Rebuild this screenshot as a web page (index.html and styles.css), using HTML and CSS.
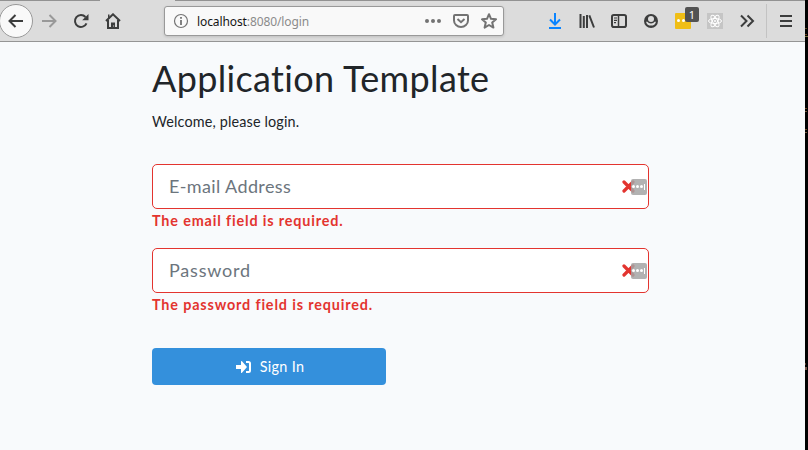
FILE: index.html
```html
<!DOCTYPE html>
<html lang="en">
<head>
<meta charset="utf-8">
<title>Application Template</title>
<link rel="stylesheet" href="styles.css">
</head>
<body>
<div class="window">
  <header class="toolbar">
    <span class="tool back"><svg width="16" height="16" viewBox="0 0 16 16"><path d="M15 8H2M7.500 2L1.500 8l6 6"/></svg></span>
    <span class="tool forward"><svg width="16" height="16" viewBox="0 0 16 16"><path d="M1 8h13M8.500 2l6 6-6 6"/></svg></span>
    <span class="tool"><svg width="16" height="16" viewBox="0 0 16 16"><path d="M13.500 10.300A6 6 0 1 1 12.500 4"/><path class="solid" d="M15.500 1v6.300H9.200z"/></svg></span>
    <span class="tool"><svg width="16" height="16" viewBox="0 0 16 16"><path d="M1 8l7-6.700L15 8M3 7v8h10V7"/><path class="solid" d="M6 9.500h4V15H6zM3 1.500h1.500v4H3z"/><path class="dot" d="M8.600 12.500v1"/></svg></span>
    <div class="address">
      <svg class="info" width="16" height="16" viewBox="0 0 16 16"><circle cx="8" cy="8" r="6.500" stroke-width="1.200"/><path stroke-width="1.800" d="M8 7v5M8 4v1.700"/></svg>
      <span class="url">localhost<span class="path">:8080/login</span></span>
      <span class="actions">
        <svg width="16" height="16" viewBox="0 0 16 16"><g class="solid"><circle cx="2" cy="8" r="2"/><circle cx="8" cy="8" r="2"/><circle cx="14" cy="8" r="2"/></g></svg>
        <svg width="16" height="16" viewBox="0 0 16 16"><path d="M2 2h12q1 0 1 1v4.500a7 6.500 0 0 1-14 0V3q0-1 1-1zM4.500 6L8 9.200 11.500 6"/></svg>
        <svg width="16" height="16" viewBox="0 0 16 16"><path stroke-linejoin="round" d="M8 1.200l2 4.600 5 .5-3.800 3.300 1.200 5L8 12l-4.400 2.600 1.200-5L1 6.300l5-.5z"/></svg>
      </span>
    </div>
    <div class="extras">
      <span class="tool download"><svg width="16" height="16" viewBox="0 0 16 16"><path d="M8 0v11M3 6.500l5 5 5-5M2 15h12"/></svg></span>
      <span class="tool"><svg width="16" height="16" viewBox="0 0 16 16"><path d="M1.500 1v14M4.800 3v12M8 2v13M10.300 2.300L15 14.500"/></svg></span>
      <span class="tool"><svg width="16" height="16" viewBox="0 0 16 16"><rect x="1" y="2" width="14" height="12" rx="1.800"/><path stroke-width="1.500" d="M7.500 2v12"/><path stroke-width="1.200" d="M3 5h3M3 7.300h3M3 9.600h2"/></svg></span>
      <span class="tool"><svg width="16" height="16" viewBox="0 0 16 16"><circle class="solid" cx="8" cy="8" r="7"/><circle class="face" cx="8" cy="5.900" r="3"/><path class="face" d="M3 8.700h1.400Q5.500 10.500 8 10.500t3.600-1.800H13Q12 12.600 8 12.600T3 8.700z"/></svg></span>
      <span class="tool"><span class="passwords"><i></i><i></i><i></i></span><span class="badge">1</span></span>
      <span class="tool"><svg class="react" width="16" height="16" viewBox="0 0 16 16"><ellipse cx="8" cy="8" rx="6.500" ry="2.500"/><ellipse cx="8" cy="8" rx="6.500" ry="2.500" transform="rotate(60 8 8)"/><ellipse cx="8" cy="8" rx="6.500" ry="2.500" transform="rotate(120 8 8)"/><circle cx="8" cy="8" r=".7"/></svg></span>
      <span class="tool"><svg width="16" height="16" viewBox="0 0 16 16"><path d="M2 2.500L7.500 8 2 13.500M8.500 2.500L14 8l-5.500 5.500"/></svg></span>
      <span class="tool menu"><svg width="16" height="16" viewBox="0 0 16 16"><path d="M2 3h12M2 8h12M2 13h12"/></svg></span>
    </div>
  </header>
  <main class="login">
    <h1>Application Template</h1>
    <p class="welcome">Welcome, please login.</p>
    <form>
      <div class="field">
        <div class="input"><span class="email-label">E-mail Address</span><span class="marks"><svg width="13" height="13" viewBox="0 0 13 13"><path d="M2 2l9 9M11 2l-9 9"/></svg><span class="manager"><i></i><i></i><i></i><b></b></span></span></div>
        <p class="error">The email field is required.</p>
      </div>
      <div class="field">
        <div class="input"><span class="password-label">Password</span><span class="marks"><svg width="13" height="13" viewBox="0 0 13 13"><path d="M2 2l9 9M11 2l-9 9"/></svg><span class="manager"><i></i><i></i><i></i><b></b></span></span></div>
        <p class="error">The password field is required.</p>
      </div>
      <button type="button"><svg width="15" height="14" viewBox="0 0 15 14"><path fill="#fff" d="M0 5h5V1.500q0-1 1-.3L11 7l-5 5.800q-1 .7-1-.3V9H0z"/><path fill="none" stroke="#fff" stroke-width="2" d="M10 2h2.500q1.500 0 1.500 1.500v7q0 1.500-1.500 1.500H10"/></svg><span>Sign In</span></button>
    </form>
  </main>
</div>
</body>
</html>
```
FILE: styles.css
```css
* { box-sizing: border-box; }
html { background: #000; }
body {
  margin: 0;
  overflow: hidden;
  background:
    linear-gradient(#55431f, #55431f) 805px 28px / 2px 1px no-repeat,
    linear-gradient(#69421f, #69421f) 805px 34px / 2px 1px no-repeat,
    linear-gradient(#77713c, #77713c) 805px 36px / 3px 1px no-repeat,
    linear-gradient(#69421f, #69421f) 805px 108px / 2px 1px no-repeat,
    linear-gradient(#73533b, #73533b) 805px 111px / 2px 1px no-repeat,
    linear-gradient(#69421f, #69421f) 805px 129px / 2px 1px no-repeat,
    linear-gradient(#73533b, #73533b) 805px 132px / 2px 1px no-repeat,
    linear-gradient(#55352a, #55352a) 805px 363px / 1px 2px no-repeat,
    linear-gradient(#77574a, #77574a) 805px 367px / 2px 3px no-repeat,
    #000;
}
.window { width: 805px; height: 450px; background: #f8fafc; font-family: Lato, sans-serif; color: #212529; }
.toolbar {
  display: flex;
  align-items: center;
  height: 42px;
  border-bottom: 1px solid #959595;
  background: linear-gradient(90deg, #929292 100px, #dcdcdc 100px 175px, #929292 175px) top / 100% 1px no-repeat #dcdcdc;
}
.toolbar svg { display: block; fill: none; stroke: currentColor; stroke-width: 2; }
.toolbar .solid { fill: currentColor; stroke: none; }
.toolbar .face { fill: #dcdcdc; stroke: none; }
.toolbar .dot { stroke: #ddd; stroke-width: 1; }
.tool { position: relative; flex: none; display: grid; place-items: center; width: 32px; height: 34px; color: #3c3d3d; }
.back { width: 34px; margin-left: -1px; border: 1px solid #999; border-radius: 50%; background: #f9f9f9; }
.forward { color: #999; }
.address {
  display: flex;
  flex: none;
  align-items: center;
  width: 340px;
  height: 30px;
  margin-left: 35px;
  padding: 0 6px 0 8px;
  border: 1px solid #999;
  border-radius: 3px;
  background: #f9f9f9;
  box-shadow: 0 1px 3px #0002;
  color: #737373;
}
.url { margin: 1px 0 0 8px; font: 12px "Noto Sans", sans-serif; letter-spacing: -.1px; color: #151515; }
.path { color: #8b8b8b; }
.actions { display: flex; gap: 12px; margin-left: auto; }
.extras { display: flex; flex: none; margin-left: 35px; }
.download { color: #0a84ff; }
.passwords { display: flex; align-items: center; gap: 2px; width: 16px; height: 16px; padding-left: 2px; border-radius: 1px; background: #f0be16; }
.passwords i { width: 3px; height: 3px; border-radius: 50%; background: #fff; }
.badge { position: absolute; left: 18px; top: 3px; width: 14px; height: 15px; border-radius: 2px; background: #525252; color: #fff; font: 11px/15px "Noto Sans", sans-serif; text-align: center; }
.toolbar .react { background: #c5c5c5; stroke: #fff; stroke-width: 1; }
.menu { width: 39px; margin-left: 3px; border-left: 1px solid #c3c3c3; }
.login { width: 497px; margin-left: 152px; padding-top: 15px; }
h1 { margin: 0; font-size: 36px; font-weight: 400; line-height: 43px; letter-spacing: .35px; white-space: nowrap; }
.welcome { margin: 10px 0 31px; font-size: 14.4px; line-height: 23px; letter-spacing: .15px; }
.field { height: 84px; }
.input { display: flex; align-items: center; height: 45px; padding: 0 1px 0 16px; border: 1px solid #e3342f; border-radius: 5px; background: #fff; color: #6c757d; font-size: 18px; }
.email-label { margin-bottom: 2px; letter-spacing: .38px; }
.password-label { margin-bottom: 2px; letter-spacing: .8px; }
.marks { display: flex; align-items: center; margin-left: auto; }
.marks svg { margin-right: -4px; stroke: #e3342f; stroke-width: 3.2; stroke-linecap: round; }
.manager { display: flex; align-items: center; gap: 1px; width: 16px; height: 16px; padding-left: 1px; border-radius: 2px; background: #a5a5a5d9; }
.manager i { width: 3px; height: 3px; border-radius: 50%; background: #fff; }
.manager b { width: 1px; height: 6px; background: #fff; }
.error { margin: 2px 0 0; color: #e3342f; font-size: 14.4px; font-weight: 700; line-height: 20px; letter-spacing: .84px; }
button { display: flex; align-items: center; justify-content: center; gap: 9px; width: 234px; height: 37px; margin-top: 16px; padding: 0 0 0 2px; border: 0; border-radius: 4px; background: #3490dc; color: #fff; font: 14.4px Lato, sans-serif; letter-spacing: .3px; }
```
